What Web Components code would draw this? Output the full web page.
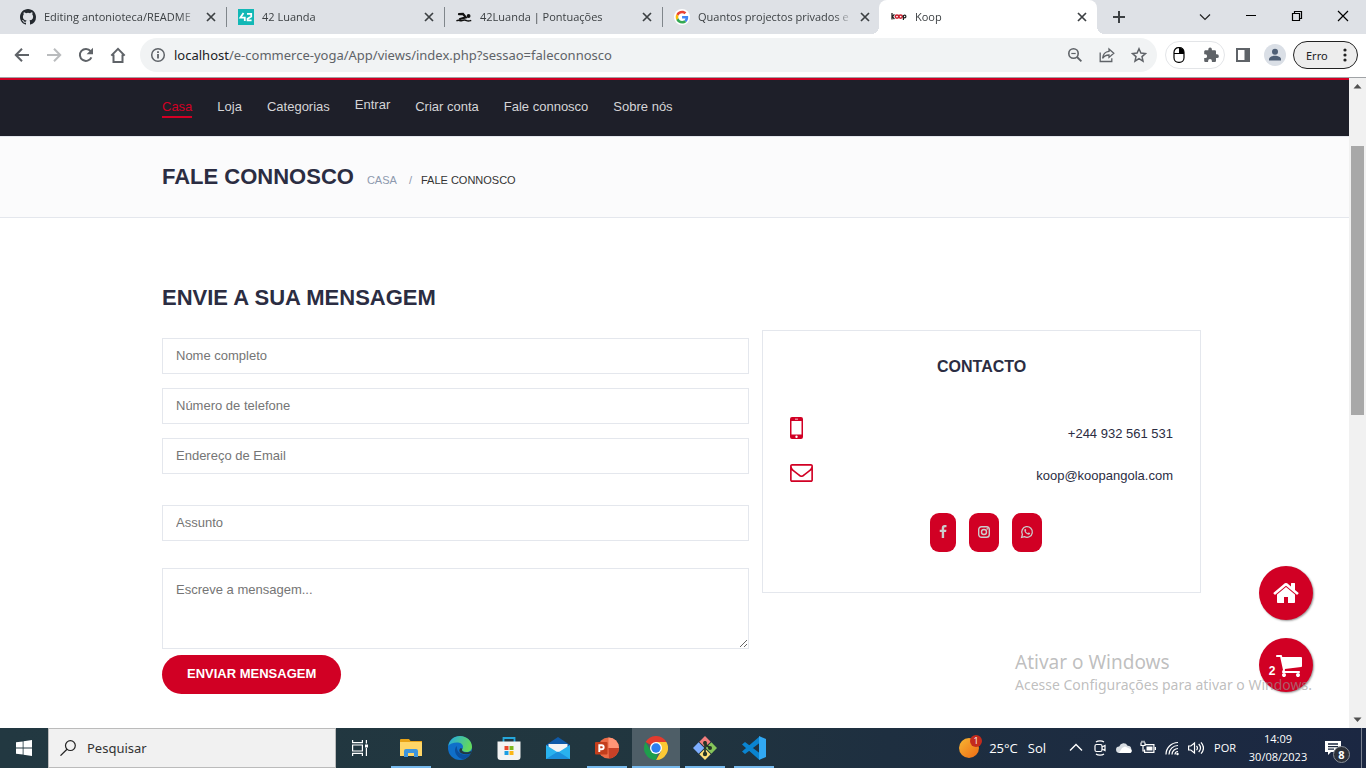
<!DOCTYPE html>
<html lang="pt">
<head>
<meta charset="utf-8">
<title>Koop</title>
<style>
  html, body { margin: 0; height: 100%; }
  body { font-family: "Liberation Sans", Arial, sans-serif; background: #fff; overflow: hidden; }
</style>
</head>
<body>
<desktop-screen></desktop-screen>
<script>
const define = (name, css, html, setup) => {
  const template = document.createElement('template');
  template.innerHTML = `<style>*,*::before,*::after{box-sizing:border-box}${css}</style>${html}`;
  customElements.define(name, class extends HTMLElement {
    constructor() {
      super();
      this.attachShadow({ mode: 'open' }).append(template.content.cloneNode(true));
    }
    connectedCallback() { if (setup) setup.call(this, this.shadowRoot); }
  });
};

const ICONS = {
  github: ['0 0 16 16', '<path fill="#24292f" d="M8 0C3.58 0 0 3.58 0 8c0 3.54 2.29 6.53 5.47 7.59.4.07.55-.17.55-.38 0-.19-.01-.82-.01-1.49-2.01.37-2.53-.49-2.69-.94-.09-.23-.48-.94-.82-1.13-.28-.15-.68-.52-.01-.53.63-.01 1.08.58 1.23.82.72 1.21 1.87.87 2.33.66.07-.52.28-.87.51-1.07-1.78-.2-3.64-.89-3.64-3.95 0-.87.31-1.59.82-2.15-.08-.2-.36-1.02.08-2.12 0 0 .67-.21 2.2.82a7.4 7.4 0 0 1 4 0c1.53-1.04 2.2-.82 2.2-.82.44 1.1.16 1.92.08 2.12.51.56.82 1.27.82 2.15 0 3.07-1.87 3.75-3.65 3.95.29.25.54.73.54 1.48 0 1.07-.01 1.93-.01 2.2 0 .21.15.46.55.38A8.01 8.01 0 0 0 16 8c0-4.42-3.58-8-8-8z"/>'],
  luanda: ['0 0 16 16', '<path fill="#12b8b6" d="M0 0h16v16H0z"/><path fill="none" stroke="#fff" stroke-width="1.8" d="M5.5 4 2.4 8.6h4.4V12M9 4.8h4.2v2.6L9.6 9.8v1.6h4"/>'],
  swimmer: ['0 0 16 16', '<g fill="none" stroke="#111" stroke-linecap="round"><path stroke-width="2.2" d="M3 5.2 7 5l2.800 3.400L4 10"/><path stroke-width="1.500" d="M1 11.600c2-1.200 3 .8 5 0s3.400-.6 4.600 0 2.600.4 4 0"/></g><circle cx="12.600" cy="7" r="1.900" fill="#111"/>'],
  google: ['0 0 48 48', '<circle cx="24" cy="24" r="24" fill="#fff"/><g transform="translate(5 5) scale(.8)"><path fill="#ea4335" d="M24 9.500c3.540 0 6.710 1.220 9.210 3.600l6.850-6.850C35.900 2.380 30.470 0 24 0 14.620 0 6.510 5.380 2.560 13.220l7.980 6.190C12.430 13.720 17.740 9.500 24 9.500z"/><path fill="#4285f4" d="M46.980 24.550c0-1.570-.15-3.090-.38-4.550H24v9.020h12.940c-.58 2.960-2.260 5.480-4.780 7.180l7.730 6c4.510-4.180 7.090-10.360 7.090-17.650z"/><path fill="#fbbc05" d="M10.530 28.590c-.48-1.450-.76-2.990-.76-4.590s.27-3.140.76-4.590l-7.980-6.190C.92 16.460 0 20.120 0 24s.92 7.540 2.560 10.780l7.970-6.190z"/><path fill="#34a853" d="M24 48c6.480 0 11.930-2.130 15.890-5.810l-7.730-6c-2.150 1.450-4.920 2.300-8.160 2.300-6.260 0-11.570-4.220-13.470-9.910l-7.980 6.190C6.510 42.620 14.620 48 24 48z"/></g>'],
  koop: ['0 0 16 16', '<path d="M1 4v6.500M3.400 5.400 1.400 7.600l2 2.600" fill="none" stroke="#222" stroke-width="1.300"/><circle cx="6" cy="7.600" r="1.700" fill="none" stroke="#c8202f" stroke-width="1.500"/><circle cx="9.600" cy="7.600" r="1.700" fill="none" stroke="#c8202f" stroke-width="1.500"/><circle cx="13.600" cy="7.500" r="1.300" fill="none" stroke="#222" stroke-width="1.200"/><path d="M12.400 6v5" stroke="#222" stroke-width="1.200"/>'],
  close: ['0 0 16 16', '<path stroke="#3c4043" stroke-width="1.700" d="m4 4 8 8M12 4l-8 8"/>'],
  plus: ['0 0 16 16', '<path stroke="#3c4043" stroke-width="2" d="M8 2v12M2 8h12"/>'],
  winChevron: ['0 0 16 16', '<path fill="none" stroke="#222" stroke-width="1.200" d="m3 5.500 5 5 5-5"/>'],
  minimize: ['0 0 16 16', '<path stroke="#000" d="M3 6.500h10"/>'],
  restore: ['0 0 16 16', '<path fill="none" stroke="#000" stroke-width="1.200" d="M3.500 4.500h7v7h-7zM5.500 4.500v-2h7v7h-2"/>'],
  winClose: ['0 0 16 16', '<path stroke="#000" stroke-width="1.200" d="m3 2 10 10M13 2 3 12"/>'],
  back: ['0 0 16 16', '<path fill="none" stroke="#5f6368" stroke-width="2" d="M15 8H2.500M8 1.800 1.800 8 8 14.200"/>'],
  forward: ['0 0 16 16', '<path fill="none" stroke="#babcbe" stroke-width="2" d="M1 8h12.500M8 1.800 14.200 8 8 14.200"/>'],
  reload: ['0 0 16 16', '<path fill="none" stroke="#5f6368" stroke-width="2" d="M13.400 10.300A6 6 0 1 1 12.600 4.200"/><path fill="#5f6368" d="M15 .8v6.400H8.600z"/>'],
  home: ['0 0 16 16', '<path fill="none" stroke="#5f6368" stroke-width="2" d="M1.300 8.600 8 1.800l6.700 6.800M3.500 7.500V15h9V7.500"/>'],
  info: ['0 0 16 16', '<circle cx="8" cy="8" r="6.300" fill="none" stroke="#5f6368" stroke-width="1.500"/><path fill="#5f6368" d="M7.100 7h1.800v4.600H7.100zM7.100 4.300h1.800V6H7.100z"/>'],
  zoomOut: ['0 0 16 16', '<circle cx="6.500" cy="6.500" r="4.700" fill="none" stroke="#5f6368" stroke-width="1.600"/><path stroke="#5f6368" stroke-width="1.800" d="m10 10 4.400 4.400"/><path stroke="#5f6368" stroke-width="1.200" d="M4.300 6.500h4.400"/>'],
  share: ['0 0 16 16', '<path fill="none" stroke="#5f6368" stroke-width="1.300" d="M1.200 5.500v9h11.600v-3.200M10 2l4.800 4.200L10 10.400V8C7 8 5 9 3.600 11.300 4 7.300 6.400 4.800 10 4.400z"/>'],
  star: ['0 0 16 16', '<path fill="none" stroke="#5f6368" stroke-width="1.500" d="m8 1.800 1.900 4.300 4.600.4-3.500 3.100 1 4.600-4-2.500-4 2.500 1-4.600-3.500-3.100 4.600-.4z"/>'],
  mouse: ['0 0 16 16', '<rect x="3" y=".7" width="10" height="14.600" rx="4.500" fill="#fff" stroke="#000" stroke-width="1.200"/><path d="M8 1v5.500h5V4.800A4 4 0 0 0 9.500 1z"/><path stroke="#000" d="M3 6.500h10"/>'],
  puzzle: ['0 0 16 16', '<path fill="#5f6368" d="M14 7.300h-1V4.600c0-.8-.6-1.300-1.300-1.300H8.900V2.400a1.800 1.800 0 0 0-3.600 0v.9H2.500c-.7 0-1.300.6-1.300 1.300v2.700h1a1.900 1.900 0 0 1 0 3.800h-1v2.600c0 .8.600 1.300 1.300 1.300h2.600v-1a1.900 1.900 0 0 1 3.800 0v1h2.800c.7 0 1.300-.6 1.300-1.300V11h1a1.850 1.850 0 0 0 0-3.700z"/>'],
  sidePanel: ['0 0 16 16', '<path fill="#5f6368" fill-rule="evenodd" d="M1 1h14v14H1zM3 3v10h6.500V3z"/>'],
  avatar: ['0 0 22 22', '<circle cx="11" cy="11" r="11" fill="#dadfe6"/><circle cx="11" cy="7.800" r="3" fill="#4f5f75"/><path fill="#4f5f75" d="M5 16.500v-1.300c0-2.200 3.200-3.400 6-3.400s6 1.200 6 3.400v1.300z"/>'],
  dots: ['0 0 16 16', '<g fill="#222"><circle cx="8" cy="3" r="1.600"/><circle cx="8" cy="8" r="1.600"/><circle cx="8" cy="13" r="1.600"/></g>'],
  phone: ['0 0 13 22', '<path fill="#d10024" fill-rule="evenodd" d="M2 0h9a2 2 0 0 1 2 2v18a2 2 0 0 1-2 2H2a2 2 0 0 1-2-2V2a2 2 0 0 1 2-2zM1.500 4v13.500h10V4zM5 1.700v.9h3v-.9zM6.500 18.600a1.200 1.200 0 1 0 0 2.400 1.200 1.200 0 0 0 0-2.400z"/>'],
  envelope: ['0 256 1792 1408', '<path fill="#d10024" d="M1664 1504v-768q-32 36-69 66-268 206-426 338-51 43-83 67t-86.500 48.500-102.500 24.500h-2q-48 0-102.500-24.500t-86.500-48.500-83-67q-158-132-426-338-37-30-69-66v768q0 13 9.500 22.500t22.500 9.500h1472q13 0 22.500-9.500t9.500-22.500zm0-1051v-24.500l-.5-13-3-12.500-5.500-9-9-7.500-14-2.500h-1472q-13 0-22.500 9.500t-9.500 22.500q0 168 147 284 193 152 401 317 6 5 35 29.500t46 37.500 44.500 31.500 50.500 27.500 43 9h2q20 0 43-9t50.500-27.500 44.500-31.500 46-37.500 35-29.500q208-165 401-317 54-43 100.500-115.500t46.500-131.500zm128-37v1088q0 66-47 113t-113 47h-1472q-66 0-113-47t-47-113v-1088q0-66 47-113t113-47h1472q66 0 113 47t47 113z"/>'],
  facebook: ['0 0 1792 1792', '<path fill="#ccc" d="M1343 12v264h-157q-86 0-116 36t-30 108v189h293l-39 296h-254v759h-306v-759h-255v-296h255v-218q0-186 104-288.500t277-102.500q147 0 228 12z"/>'],
  instagram: ['0 0 14 14', '<g fill="none" stroke="#ccc" stroke-width="1.400"><rect x="1.700" y="1.700" width="10.600" height="10.600" rx="2.800"/><circle cx="7" cy="7" r="2.500"/></g><circle cx="10.200" cy="3.900" r=".8" fill="#ccc"/>'],
  whatsapp: ['0 0 14 14', '<path fill="none" stroke="#ccc" stroke-width="1.300" d="m1.600 12.400.8-2.900a5.300 5.300 0 1 1 2.100 2.100z"/><path fill="#ccc" d="M4.600 4.300c.5-.6 1-.5 1.200 0l.4 1c.1.400-.5.700-.5 1 .6 1 1.200 1.500 2.100 1.900.4 0 .6-.8 1-.7l1.200.6c.3.300-.1 1.300-.8 1.500C7 10.200 3.400 6.600 4.600 4.300z"/>'],
  house: ['0 0 1792 1792', '<path fill="#fff" d="M1472 992v480q0 26-19 45t-45 19h-384v-384h-256v384h-384q-26 0-45-19t-19-45v-480q0-1 .5-3t.5-3l575-474 575 474q1 2 1 6zm223-69l-62 74q-8 9-21 11h-3q-13 0-21-7l-692-577-692 577q-12 8-24 7-13-2-21-11l-62-74q-8-10-7-23.500t11-21.500l719-599q32-26 76-26t76 26l244 204v-195q0-14 9-23t23-9h192q14 0 23 9t9 23v408l219 182q10 8 11 21.500t-7 23.500z"/>'],
  cart: ['0 0 1792 1792', '<path fill="#fff" d="M704 1536q0 52-38 90t-90 38-90-38-38-90 38-90 90-38 90 38 38 90zm896 0q0 52-38 90t-90 38-90-38-38-90 38-90 90-38 90 38 38 90zm128-1088v512q0 24-16.500 42.500t-40.500 21.500l-1044 122q13 60 13 70 0 16-24 64h920q26 0 45 19t19 45-19 45-45 19h-1024q-26 0-45-19t-19-45q0-11 8-31.500t16-36 21.500-40 15.500-29.500l-177-823h-204q-26 0-45-19t-19-45 19-45 45-19h256q16 0 28.500 6.500t19.500 15.500 13 24.500 8 26 5.500 29.500 4.500 26h1201q26 0 45 19t19 45z"/>'],
  scrollUp: ['0 0 17 17', '<path fill="#505050" d="m8.500 6 4 4.500h-8z"/>'],
  scrollDown: ['0 0 17 17', '<path fill="#505050" d="m8.500 11 4-4.500h-8z"/>'],
  start: ['0 0 16 16', '<path fill="#fff" d="M0 2.300 6.700 1.400v6.200H0zM7.500 1.300 16 .1v7.500H7.500zM0 8.400h6.700v6.200L0 13.700zM7.500 8.400H16v7.500l-8.500-1.200z"/>'],
  search: ['0 0 16 16', '<circle cx="10.400" cy="5.600" r="4.900" fill="none" stroke="#222" stroke-width="1.200"/><path stroke="#222" stroke-width="1.300" d="M7 9.200.5 15.600"/>'],
  taskView: ['0 0 16 16', '<g fill="none" stroke="#fff" stroke-width="1.200"><path d="M.6 0v2.600h9.800V0M.6 16v-2.600h9.800V16M.6 5h9.800v6H.6zM14.400 0v3.500M14.400 8v8"/></g><path fill="#fff" d="M13 4.500h3v3h-3z"/>'],
  explorer: ['0 0 24 24', '<path fill="#e8a317" d="M1 4a1 1 0 0 1 1-1h8l1.500 2H23v5H1z"/><path fill="#ffd667" d="M1 6h21a1 1 0 0 1 1 1v13H1z"/><path fill="#3e95dc" d="M5 21v-6a2 2 0 0 1 2-2h10a2 2 0 0 1 2 2v6h-4v-4H9v4z"/>'],
  edge: ['0 0 24 24', '<defs><linearGradient id="g1" x2="1" y2=".3"><stop stop-color="#22a8e8"/><stop offset="1" stop-color="#63d95c"/></linearGradient></defs><circle cx="12" cy="12" r="12" fill="#0f6fc9"/><path fill="url(#g1)" d="M.3 10C1.200 4 6 0 12 0c7 0 12 5 12 11 0 3-2.500 5-5.500 5-3 0-4.500-1-4.500-2s1-1.500 1-3.200C15 8 12 6.500 9 6.500 5 6.500 1.500 8 .3 10z"/><path fill="#0b4f9e" d="M9 10c-2 1.500-2.600 4-1.500 7 1.300 3.500 5 6.500 9 6 2.500-1 4.800-3 6-5.200-3 1.400-7 1.500-10-.3C9.600 15.600 8.500 13 9 10z"/><path fill="#223841" d="M14.500 12.500c-.8 1-.8 2.200.5 3 2.600 1.400 6 1 8.300-.5l-.3 2.200c-3 1.400-7 1.400-9.800 0-2-1-2.500-3.200-1-5z"/>'],
  store: ['0 0 24 24', '<path fill="none" stroke="#25a7dc" stroke-width="1.800" d="M6.500 7V2h11v5"/><path fill="#f3f3f3" d="M.5 5.500h23V21a3 3 0 0 1-3 3h-17a3 3 0 0 1-3-3z"/><path fill="#e8472c" d="M7.500 10h4v4h-4z"/><path fill="#7db71c" d="M12.500 10h4v4h-4z"/><path fill="#1d9ee3" d="M7.500 15h4v4h-4z"/><path fill="#fbb716" d="M12.500 15h4v4h-4z"/>'],
  mail: ['0 0 24 24', '<path fill="#0f5aa8" d="M0 9 12 1l12 8v4H0z"/><path fill="#f4f4f4" d="M2.500 8h19v6L12 19l-9.500-5z"/><path fill="#29b2ee" d="M0 9v14h24V9L12 16.500z"/><path fill="#1b8fdb" d="m0 23 12-7.500L24 23z"/>'],
  powerpoint: ['0 0 24 24', '<circle cx="13.500" cy="12" r="10.500" fill="#ed6c47"/><path fill="#ff9577" d="M13.500 1.500A10.500 10.500 0 0 1 24 12H13.500z"/><path fill="#c94127" d="M13.500 12H24a10.500 10.500 0 0 1-10 10.500z"/><rect y="6" width="12.500" height="12.500" rx="1" fill="#c43e1c"/><path fill="none" stroke="#fff" stroke-width="1.900" d="M4.300 16V9.200h2.400a2 2 0 0 1 0 4H4.300"/>'],
  chrome: ['0 0 24 24', '<path fill="#e33b2e" d="M1.600 6A12 12 0 0 1 22.400 6H12v6z"/><path fill="#fcc934" d="M22.400 6A12 12 0 0 1 12 24l5.200-9L12 6z"/><path fill="#1e9e4c" d="M12 24A12 12 0 0 1 1.600 6l5.200 9 7 2z"/><circle cx="12" cy="12" r="6" fill="#fff"/><circle cx="12" cy="12" r="4.700" fill="#2c7ef0"/>'],
  git: ['0 0 24 24', '<g transform="rotate(45 12 12)"><rect x="3.500" y="3.500" width="8" height="8" fill="#f27d7d"/><rect x="12.500" y="3.500" width="8" height="8" fill="#86c55a"/><rect x="3.500" y="12.500" width="8" height="8" fill="#7eaeff"/><rect x="12.500" y="12.500" width="8" height="8" fill="#ffe079"/></g><path fill="none" stroke="#263426" stroke-width="1.700" d="M12 5v14M12 8l5 4"/><g fill="#263426"><circle cx="12" cy="7" r="2"/><circle cx="17" cy="12" r="2"/><circle cx="12" cy="18" r="2.200"/></g>'],
  vscode: ['0 0 24 24', '<path fill="#0a84d0" d="M17.500 0v7L3 18l-3-2.500 17.500-15zM0 8.500 3 6l14.500 11v7z"/><path fill="#31a8f3" d="M17 0 24 3v18l-7 3z"/>'],
  sun: ['0 0 22 22', '<defs><linearGradient id="g2" x2="1" y2="1"><stop stop-color="#f7b733"/><stop offset="1" stop-color="#ee6a14"/></linearGradient></defs><circle cx="10" cy="11" r="10" fill="url(#g2)"/>'],
  trayUp: ['0 0 16 16', '<path fill="none" stroke="#fff" stroke-width="1.400" d="m2 10.500 6-6 6 6"/>'],
  meet: ['0 0 16 16', '<g fill="none" stroke="#fff" stroke-width="1.200"><rect x="3" y="4.500" width="7" height="7" rx="1.500"/><path d="m10 7 3-1.500v5L10 9M4 2c2-1.600 6-1.600 8 0M4 14c2 1.600 6 1.600 8 0"/></g>'],
  cloud: ['0 0 16 16', '<path fill="#d8dde2" d="M3.500 13a3.300 3.300 0 0 1-.3-6.600 4.600 4.600 0 0 1 8.400-.7A3.700 3.700 0 0 1 12.500 13z"/><path fill="#fff" d="m6 8 3-1.500 5.500 2.500c2.500 1.500 1 4-1 4H3z"/>'],
  battery: ['0 0 16 16', '<path fill="none" stroke="#fff" stroke-width="1.200" d="M5.500 4.600h8.400v7.800H4.600V9.500M15.400 7v3M1 2.500v3h4v-3M2 .8v2M4 .8v2M3 5.500V11h2"/><path fill="#fff" d="M6.500 6.500h6v4h-6z"/>'],
  wifi: ['0 0 16 16', '<g fill="none" stroke="#fff" stroke-width="1.200"><path d="M2 14.500A12 12 0 0 1 14 2.500"/><path d="M5 14.500a9 9 0 0 1 9-9"/><path d="M8 14.500a6 6 0 0 1 6-6M11 14.500a3 3 0 0 1 3-3"/></g><circle cx="13.500" cy="14" r="1.200" fill="#fff"/>'],
  volume: ['0 0 16 16', '<path fill="none" stroke="#fff" stroke-width="1.200" d="M.6 6v4h2.200L6.500 13V3L2.800 6zM8.500 5.800c1.200 1.400 1.200 3 0 4.400M10.700 4c2.200 2.400 2.200 5.600 0 8M13 2.400c3 3.400 3 7.800 0 11.200"/>'],
  action: ['0 0 16 16', '<path fill="#fff" d="M0 1h16v11H6l-3 3v-3H0z"/><path stroke="#1b2840" stroke-width="1.300" d="M3 4h10M3 6.600h10M3 9.200h6"/>'],
};

define('ui-icon', ':host{display:block;flex:none;width:16px;height:16px} svg{display:block;width:100%;height:100%}', '', function (root) {
  const [box, art] = ICONS[this.getAttribute('name')];
  root.innerHTML += `<svg viewBox="${box}" aria-hidden="true">${art}</svg>`;
});

/* ---------- browser window ---------- */
const SYSTEM_FONT = '"Open Sans","Noto Sans",sans-serif';
const WIDE_FONT = '"Noto Sans","Open Sans",sans-serif';

define('browser-tab', `
  :host{display:flex;align-items:center;width:218px;height:34px;padding:0 7px 0 12px;gap:8px;
    font-size:11px;line-height:16px;color:#3c4043;position:relative}
  .title{flex:1;min-width:0;overflow:hidden;white-space:nowrap;mask-image:linear-gradient(90deg,#000 88%,transparent)}
  :host::after{content:"";position:absolute;right:-1px;top:7px;height:20px;width:1px;background:#80868b}
  :host([last])::after{display:none}
  :host([active]){background:#fff;border-radius:8px 8px 0 0;margin-left:-1px}
  :host([active])::after{right:-8px;top:auto;bottom:0;width:8px;height:8px;background:radial-gradient(circle at 100% 0,transparent 8px,#fff 8px)}
  :host([active])::before{content:"";position:absolute;left:-8px;bottom:0;width:8px;height:8px;background:radial-gradient(circle at 0 0,transparent 8px,#fff 8px)}
  button{border:0;padding:0;margin-left:-4px;background:none}`,
  '<slot name="icon"></slot><span class="title"><slot></slot></span><button aria-label="Fechar separador"><ui-icon name="close"></ui-icon></button>');

define('browser-tabs', `
  :host{display:flex;align-items:center;height:34px;padding-left:8px;background:#dee1e6;font-family:${SYSTEM_FONT}}
  button{display:grid;place-items:center;border:0;padding:0;background:none;height:28px}
  .new{width:28px;margin-left:8px}
  .window{display:flex;margin-left:auto}
  .window button{width:46px}`, `
  <browser-tab><ui-icon slot="icon" name="github"></ui-icon>Editing antonioteca/README</browser-tab>
  <browser-tab><ui-icon slot="icon" name="luanda"></ui-icon>42 Luanda</browser-tab>
  <browser-tab><ui-icon slot="icon" name="swimmer"></ui-icon>42Luanda | Pontuações</browser-tab>
  <browser-tab last><ui-icon slot="icon" name="google"></ui-icon>Quantos projectos privados e</browser-tab>
  <browser-tab active><ui-icon slot="icon" name="koop"></ui-icon>Koop</browser-tab>
  <button class="new" aria-label="Novo separador"><ui-icon name="plus"></ui-icon></button>
  <div class="window">
    <button aria-label="Pesquisar separadores"><ui-icon name="winChevron"></ui-icon></button>
    <button aria-label="Minimizar"><ui-icon name="minimize"></ui-icon></button>
    <button aria-label="Restaurar"><ui-icon name="restore"></ui-icon></button>
    <button aria-label="Fechar"><ui-icon name="winClose"></ui-icon></button>
  </div>`);

define('browser-toolbar', `
  :host{display:flex;align-items:center;height:44px;padding:0 8px 1px 14px;background:#fff;border-bottom:1px solid #a0a3a6;font-family:${WIDE_FONT}}
  button{display:grid;place-items:center;border:0;padding:0;background:none}
  .nav{display:flex;gap:16px}
  .address{flex:1;display:flex;align-items:center;height:34px;margin:0 8px 0 14px;padding:0 10px;gap:16px;border-radius:17px;background:#f1f3f4}
  .url{flex:1;margin-left:-8px;font-size:13px;line-height:20px;color:#5f6368;white-space:nowrap}
  .url b{font-weight:400;color:#202124}
  .extensions{display:flex;gap:16px;align-items:center;height:28px;width:60px;padding:0 5px;border:1px solid #e3e5e8;border-radius:14px}
  .panel{margin-left:10px}
  .avatar{margin:0 7px 0 13px}
  .avatar ui-icon{width:22px;height:22px}
  .error{display:flex;align-items:center;justify-content:space-between;width:65px;height:28px;padding:0 4px 0 12px;border:1px solid #222;border-radius:14px;background:#ededed;font-family:inherit;font-size:11px;color:#202124}`, `
  <div class="nav">
    <button aria-label="Anterior"><ui-icon name="back"></ui-icon></button>
    <button aria-label="Seguinte"><ui-icon name="forward"></ui-icon></button>
    <button aria-label="Recarregar"><ui-icon name="reload"></ui-icon></button>
    <button aria-label="Página inicial"><ui-icon name="home"></ui-icon></button>
  </div>
  <div class="address">
    <ui-icon name="info"></ui-icon>
    <span class="url"><b>localhost</b>/e-commerce-yoga/App/views/index.php?sessao=faleconnosco</span>
    <button aria-label="Zoom"><ui-icon name="zoomOut"></ui-icon></button>
    <button aria-label="Partilhar"><ui-icon name="share"></ui-icon></button>
    <button aria-label="Marcador"><ui-icon name="star"></ui-icon></button>
  </div>
  <div class="extensions">
    <button aria-label="Extensão do rato"><ui-icon name="mouse"></ui-icon></button>
    <button aria-label="Extensões"><ui-icon name="puzzle"></ui-icon></button>
  </div>
  <button class="panel" aria-label="Painel lateral"><ui-icon name="sidePanel"></ui-icon></button>
  <button class="avatar" aria-label="Perfil"><ui-icon name="avatar"></ui-icon></button>
  <button class="error">Erro<ui-icon name="dots"></ui-icon></button>`);

define('scroll-rail', `
  :host{display:flex;flex-direction:column;width:17px;background:#f1f1f1}
  ui-icon{width:17px;height:17px}
  .track{flex:1;display:grid;grid-template-rows:51fr 269fr 296fr;padding:0 2px}
  .thumb{grid-row:2;background:#a8a8a8}`,
  '<ui-icon name="scrollUp"></ui-icon><div class="track"><div class="thumb"></div></div><ui-icon name="scrollDown"></ui-icon>');

/* ---------- shop page ---------- */
define('site-nav', `
  :host{display:block;background:#1e1f29;border-top:2px solid #d10024;border-bottom:1px solid #e4e7ed}
  nav{display:flex;align-items:center;gap:25px;height:56px;max-width:1053px;margin:0 auto;padding:0 14px}
  a{padding:1px 0 2px;border-bottom:2px solid transparent;font-size:13px;line-height:15px;color:#d5d5d7;text-decoration:none;white-space:nowrap}
  .current{color:#d10024;border-color:#d10024}
  .account{padding-bottom:6px}`, `
  <nav>
    <a class="current" href="#casa">Casa</a><a href="#loja">Loja</a><a href="#categorias">Categorias</a>
    <a class="account" href="#entrar">Entrar</a><a href="#criar">Criar conta</a>
    <a href="#contacto">Fale connosco</a><a href="#sobre">Sobre nós</a>
  </nav>`);

define('page-trail', `
  :host{display:block;background:#fbfbfc;border-bottom:1px solid #e4e7ed}
  div{display:flex;align-items:baseline;max-width:1053px;margin:0 auto;padding:27px 14px}
  h1{margin:0 13px 0 0;font-size:22px;line-height:26px;color:#2b2d42}
  ol{display:flex;margin:0;padding:0;list-style:none;font-size:11px;line-height:16px;color:#333}
  a{color:#8d99ae;text-decoration:none}
  li+li::before{content:"/";margin:0 9px 0 12px;color:#8d99ae}`,
  '<div><h1>FALE CONNOSCO</h1><ol><li><a href="#casa">CASA</a></li><li>FALE CONNOSCO</li></ol></div>');

define('text-field', `
  :host{display:block}
  input,textarea{display:block;width:100%;height:36px;margin:0;padding:0 13px 2px;border:1px solid #e4e7ed;border-radius:0;background:#fff;font:13px/18px "Liberation Sans",Arial,sans-serif;color:#2b2d42}
  textarea{height:81px;padding-top:12px;resize:vertical}
  ::placeholder{color:#757575;opacity:1}`, '', function (root) {
  const long = this.hasAttribute('multiline');
  const control = document.createElement(long ? 'textarea' : 'input');
  if (!long) control.type = this.getAttribute('type') || 'text';
  control.placeholder = this.getAttribute('label');
  control.setAttribute('aria-label', this.getAttribute('label'));
  root.append(control);
});

define('message-form', `
  :host{display:block}
  h2{margin:0 0 21px;font-size:22px;line-height:38px;color:#2b2d42}
  form{display:flex;flex-direction:column}
  .person{display:grid;gap:14px;margin-bottom:31px}
  .subject{margin-bottom:27px}
  button{align-self:flex-start;height:39px;margin-top:6px;padding:0 25px 2px;border:0;border-radius:20px;background:#d10024;color:#fff;font:bold 13px/18px "Liberation Sans",Arial,sans-serif;white-space:nowrap}`, `
  <h2>ENVIE A SUA MENSAGEM</h2>
  <form>
    <div class="person">
      <text-field label="Nome completo"></text-field>
      <text-field label="Número de telefone" type="tel"></text-field>
      <text-field label="Endereço de Email" type="email"></text-field>
    </div>
    <text-field class="subject" label="Assunto"></text-field>
    <text-field label="Escreve a mensagem..." multiline></text-field>
    <button type="button">ENVIAR MENSAGEM</button>
  </form>`);

define('contact-row', `
  :host{display:flex;justify-content:space-between;align-items:flex-start;font-size:13px;line-height:18px;color:#2b2d42}
  .text{padding-top:8px}`, '<slot name="icon"></slot><span class="text"><slot></slot></span>');

define('contact-card', `
  :host{display:block;padding:25px 27px 40px;border:1px solid #e4e7ed}
  h3{margin:0 0 39px;font-size:16px;line-height:22px;text-align:center;color:#2b2d42}
  .rows{display:grid;gap:16px}
  .phone{width:13px;height:22px}
  .mail{width:23px;height:18px;margin-top:5px}
  .social{display:flex;justify-content:center;gap:13px;margin:28px 0 0 8px}
  .social a{display:grid;place-items:center;width:30px;height:39px;padding-bottom:2px;border-radius:9px;background:#d10024}
  .social a:first-child{width:26px}
  .social ui-icon{width:14px;height:14px}`, `
  <h3>CONTACTO</h3>
  <div class="rows">
    <contact-row><ui-icon class="phone" slot="icon" name="phone"></ui-icon>+244 932 561 531</contact-row>
    <contact-row><ui-icon class="mail" slot="icon" name="envelope"></ui-icon>koop@koopangola.com</contact-row>
  </div>
  <div class="social">
    <a href="#facebook" aria-label="Facebook"><ui-icon name="facebook"></ui-icon></a>
    <a href="#instagram" aria-label="Instagram"><ui-icon name="instagram"></ui-icon></a>
    <a href="#whatsapp" aria-label="WhatsApp"><ui-icon name="whatsapp"></ui-icon></a>
  </div>`);

define('float-button', `
  :host{display:block}
  a{display:flex;align-items:center;justify-content:center;width:54px;height:54px;border-radius:50%;background:#d10024;box-shadow:1px 1px 2px #999;color:#fff;text-decoration:none;font-weight:bold;font-size:12px}
  ::slotted(ui-icon){width:28px;height:28px}`, '<a href="#"><slot></slot></a>');

define('shop-page', `
  :host{display:block;position:relative;background:#fff;overflow:hidden}
  main{display:grid;grid-template-columns:7fr 5fr;align-items:start;max-width:1053px;margin:0 auto;padding-top:60px}
  message-form{padding:1px 13px 0 14px}
  contact-card{margin-top:52px}
  .floats{position:absolute;right:36px;bottom:36px;display:grid;gap:18px}
  .count{margin-top:12px}`, `
  <site-nav></site-nav>
  <page-trail></page-trail>
  <main><message-form></message-form><contact-card></contact-card></main>
  <div class="floats">
    <float-button><ui-icon name="house"></ui-icon></float-button>
    <float-button><span class="count">2</span><ui-icon name="cart"></ui-icon></float-button>
  </div>`);

/* ---------- Windows shell ---------- */
define('activation-notice', `
  :host{display:block;font-family:${WIDE_FONT};color:rgba(150,150,150,.62);pointer-events:none;white-space:nowrap}
  strong{display:block;font-weight:400;font-size:19px;line-height:26px}
  span{display:block;font-size:14px;line-height:20px}`,
  '<strong>Ativar o Windows</strong><span>Acesse Configurações para ativar o Windows.</span>');

define('task-button', `
  :host{display:block;width:48px;height:40px}
  button{display:grid;place-items:center;position:relative;width:100%;height:100%;padding:0;border:0;background:none}
  ::slotted(ui-icon){width:24px;height:24px}
  :host([open]) button::after{content:"";position:absolute;left:4px;right:4px;bottom:0;height:2px;background:#76b9ed}
  :host([active]) button{background:#4e5e67}
  :host([active]) button::after{left:0;right:0}`, '<button><slot></slot></button>', function (root) {
  root.querySelector('button').setAttribute('aria-label', this.getAttribute('label'));
});

define('task-bar', `
  :host{display:flex;height:40px;background:linear-gradient(90deg,#223841,#21363f 45%,#1e2f40 65%,#1b2742);color:#fff;font-family:${SYSTEM_FONT}}
  .small{width:16px;height:16px}
  .search{display:flex;align-items:center;gap:11px;width:288px;padding:0 11px;background:#f1f1f1;border:1px solid #bbb}
  .search input{flex:1;min-width:0;border:0;padding:0;background:none;font:13px/20px ${WIDE_FONT};color:#222}
  .search ::placeholder{color:#333;opacity:1}
  .apps{display:flex;gap:1px;margin-left:3px}
  .tray{display:flex;align-items:center;margin-left:auto;white-space:nowrap;font-size:11px;line-height:18px}
  .weather{display:flex;align-items:center;font-size:13px}
  .sun{position:relative;width:22px;height:22px;margin-right:8px}
  .sun ui-icon{width:22px;height:22px}
  .sun b{position:absolute;right:-1px;top:-2px;width:12px;height:12px;border-radius:50%;background:#c42b1c;font-size:9px;line-height:12px;font-weight:400;text-align:center}
  .weather span{margin-right:10px}
  .icons{display:flex;gap:8px;margin:0 10px 0 12px}
  time{width:58px;margin:0 18px 0 13px;text-align:center}
  .line{display:flex;justify-content:center}
  .notes{position:relative;width:25px;height:24px;margin-right:11px}
  .notes ui-icon{width:16px;height:16px;margin-top:4px}
  .notes b{position:absolute;right:0;bottom:-3px;width:17px;height:17px;border-radius:50%;border:1px solid #8a9099;background:#2c3038;font-size:11px;line-height:15px;text-align:center}
  .peek{align-self:stretch;width:5px;border-left:1px solid #79808f}`, `
  <task-button label="Iniciar"><ui-icon class="small" name="start"></ui-icon></task-button>
  <label class="search"><ui-icon name="search"></ui-icon><input type="search" placeholder="Pesquisar" aria-label="Pesquisar"></label>
  <task-button label="Vista de tarefas"><ui-icon class="small" name="taskView"></ui-icon></task-button>
  <div class="apps">
    <task-button label="Explorador" open><ui-icon name="explorer"></ui-icon></task-button>
    <task-button label="Edge"><ui-icon name="edge"></ui-icon></task-button>
    <task-button label="Loja"><ui-icon name="store"></ui-icon></task-button>
    <task-button label="Correio"><ui-icon name="mail"></ui-icon></task-button>
    <task-button label="PowerPoint" open><ui-icon name="powerpoint"></ui-icon></task-button>
    <task-button label="Chrome" open active><ui-icon name="chrome"></ui-icon></task-button>
    <task-button label="Git" open><ui-icon name="git"></ui-icon></task-button>
    <task-button label="VS Code" open><ui-icon name="vscode"></ui-icon></task-button>
  </div>
  <div class="tray">
    <div class="weather"><div class="sun"><ui-icon name="sun"></ui-icon><b>1</b></div><span>25°C</span><span>Sol</span></div>
    <div class="icons">
      <ui-icon name="trayUp"></ui-icon><ui-icon name="meet"></ui-icon><ui-icon name="cloud"></ui-icon>
      <ui-icon name="battery"></ui-icon><ui-icon name="wifi"></ui-icon><ui-icon name="volume"></ui-icon>
    </div>
    <span>POR</span>
    <time datetime="2023-08-30T14:09"><span class="line">14:09</span><span class="line">30/08/2023</span></time>
    <div class="notes"><ui-icon name="action"></ui-icon><b>8</b></div>
    <div class="peek"></div>
  </div>`);

define('desktop-screen', `
  :host{display:flex;flex-direction:column;height:100vh;min-height:600px;position:relative}
  .viewport{flex:1;min-height:0;display:flex}
  shop-page{flex:1;min-width:0}
  activation-notice{position:absolute;right:54px;bottom:73px}`, `
  <browser-tabs></browser-tabs>
  <browser-toolbar></browser-toolbar>
  <div class="viewport"><shop-page></shop-page><scroll-rail></scroll-rail></div>
  <task-bar></task-bar>
  <activation-notice></activation-notice>`);
</script>
</body>
</html>
